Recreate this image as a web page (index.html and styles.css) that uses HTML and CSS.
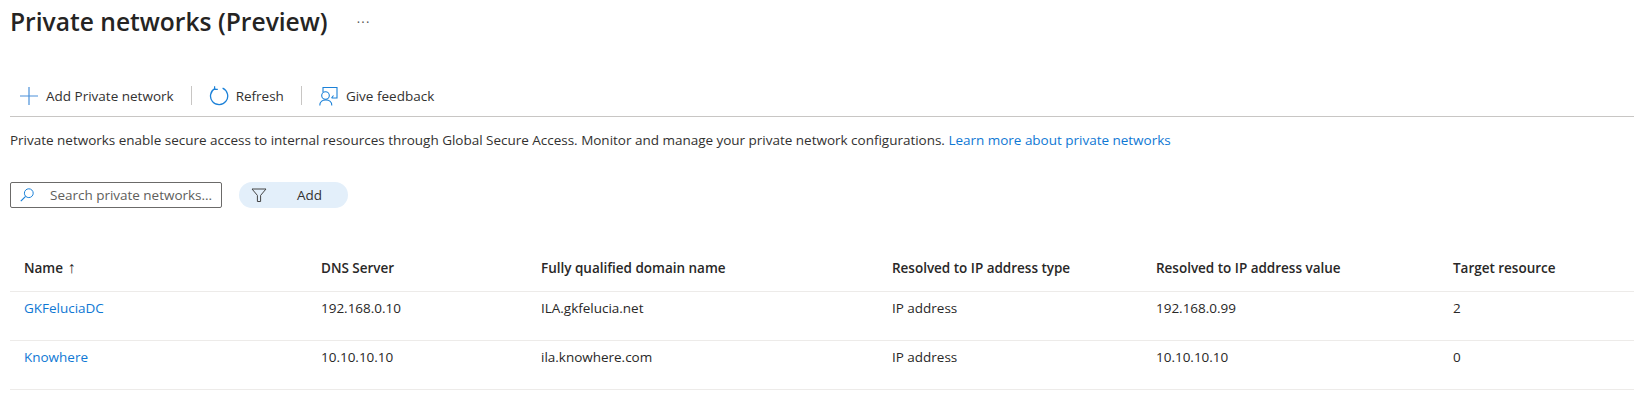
FILE: index.html
```html
<!DOCTYPE html>
<html lang="en">
<head>
<meta charset="utf-8">
<title>Private networks (Preview)</title>
<link rel="stylesheet" href="styles.css">
</head>
<body>
<main class="page">
  <header class="title-row">
    <h1 class="title">Private networks (Preview)</h1>
    <span class="more">···</span>
  </header>
  <nav class="toolbar">
    <button class="tool tool-add">
      <svg class="ico" width="20" height="20" viewBox="0 0 20 20"><path d="M10 1v18M1 10h18" fill="none" stroke="#4a90d9" stroke-width="1.2"/></svg>
      <span>Add Private network</span>
    </button>
    <span class="sep"></span>
    <button class="tool">
      <svg class="ico" width="20" height="20" viewBox="0 0 20 20"><path d="M6.2 2.4A8.6 8.6 0 1 0 13.6 2.2" fill="none" stroke="#1b81d8" stroke-width="1.3"/><path d="M5.6 0.2v3.2h3.2" fill="none" stroke="#1b81d8" stroke-width="1.2"/></svg>
      <span>Refresh</span>
    </button>
    <span class="sep"></span>
    <button class="tool">
      <svg class="ico" width="20" height="20" viewBox="0 0 20 20"><path d="M4 6V1.5h14v10.500h-2.500M12.500 12l2-2.500M12.500 12h3" fill="none" stroke="#1b81d8" stroke-width="1.1"/><circle cx="6.500" cy="9.500" r="3.800" fill="#fff" stroke="#1b81d8" stroke-width="1.100"/><path d="M0.800 19.500c0-7.500 12-7.500 12 0" fill="none" stroke="#1b81d8" stroke-width="1.100"/></svg>
      <span>Give feedback</span>
    </button>
  </nav>
  <p class="desc">Private networks enable secure access to internal resources through Global Secure Access. Monitor and manage your private network configurations. <a class="link" href="#">Learn more about private networks</a></p>
  <div class="filters">
    <label class="search">
      <svg width="14" height="14" viewBox="0 0 14 14"><circle cx="8.800" cy="5.200" r="4.400" fill="none" stroke="#1b81d8" stroke-width="1"/><path d="M5.600 8.400L0.800 13.200" stroke="#1b81d8" stroke-width="1.200"/></svg>
      <span class="placeholder">Search private networks...</span>
    </label>
    <button class="pill">
      <svg width="16" height="16" viewBox="0 0 16 16"><path d="M1 2h14L9.600 8.400V14.500H6.400V8.400z" fill="none" stroke="#444" stroke-width="1"/></svg>
      <span>Add</span>
    </button>
  </div>
  <div class="table">
    <div class="row head">
      <div>Name <span class="arrow">↑</span></div>
      <div>DNS Server</div>
      <div>Fully qualified domain name</div>
      <div>Resolved to IP address type</div>
      <div>Resolved to IP address value</div>
      <div>Target resource</div>
    </div>
    <div class="row">
      <div><a class="link" href="#">GKFeluciaDC</a></div>
      <div>192.168.0.10</div>
      <div>ILA.gkfelucia.net</div>
      <div>IP address</div>
      <div>192.168.0.99</div>
      <div>2</div>
    </div>
    <div class="row">
      <div><a class="link" href="#">Knowhere</a></div>
      <div>10.10.10.10</div>
      <div>ila.knowhere.com</div>
      <div>IP address</div>
      <div>10.10.10.10</div>
      <div>0</div>
    </div>
  </div>
</main>
</body>
</html>
```
FILE: styles.css
```css
* { box-sizing: border-box; }
html, body { margin: 0; background: #fff; }
body { font-family: "Open Sans", "Noto Sans", sans-serif; font-size: 13.5px; color: #292827; letter-spacing: -0.015px; overflow: hidden; }
.page { padding-left: 10px; height: 414px; }
.title-row { display: flex; align-items: center; height: 44px; }
.title { margin: 0; font-size: 24.6px; font-weight: 600; letter-spacing: 0; color: #252423; line-height: 44px; }
.more { margin-left: 29px; font-size: 13px; letter-spacing: 1.2px; color: #555; }
.toolbar { display: flex; align-items: center; margin-top: 28px; height: 45px; border-bottom: 1px solid #c8c6c4; padding-top: 3px; padding-left: 9px; }
.tool { display: flex; align-items: center; gap: 7px; background: none; border: 0; padding: 0; font: inherit; letter-spacing: 0; color: #323130; }
.sep { width: 1px; height: 19px; background: #c8c6c4; margin: 0 17px; }
.desc { margin: 14px 0 0; line-height: 18px; white-space: nowrap; color: #323130; }
.link { color: #0f78d4; text-decoration: none; }
.filters { display: flex; align-items: center; margin-top: 33px; }
.search { display: flex; align-items: center; width: 212px; height: 26px; border: 1px solid #6b6a69; border-radius: 2px; padding-left: 9px; gap: 16px; white-space: nowrap; overflow: hidden; }
.placeholder { color: #605e5c; }
.pill { display: flex; align-items: center; width: 109px; height: 26px; margin-left: 17px; border: 0; border-radius: 13px; background: #e3effa; padding: 0 0 0 12px; gap: 30px; font: inherit; letter-spacing: inherit; color: #323130; }
.table { margin-top: 39px; }
.row { display: grid; grid-template-columns: 297px 220px 351px 264px 297px 1fr; height: 49px; padding: 7px 0 0 14px; border-bottom: 1px solid #edebe9; line-height: 18px; white-space: nowrap; }
.head { height: 45px; padding-top: 12px; font-weight: 600; color: #292827; }
.arrow { font-size: 16px; line-height: 16px; font-weight: 400; margin-left: 1px; }
```
